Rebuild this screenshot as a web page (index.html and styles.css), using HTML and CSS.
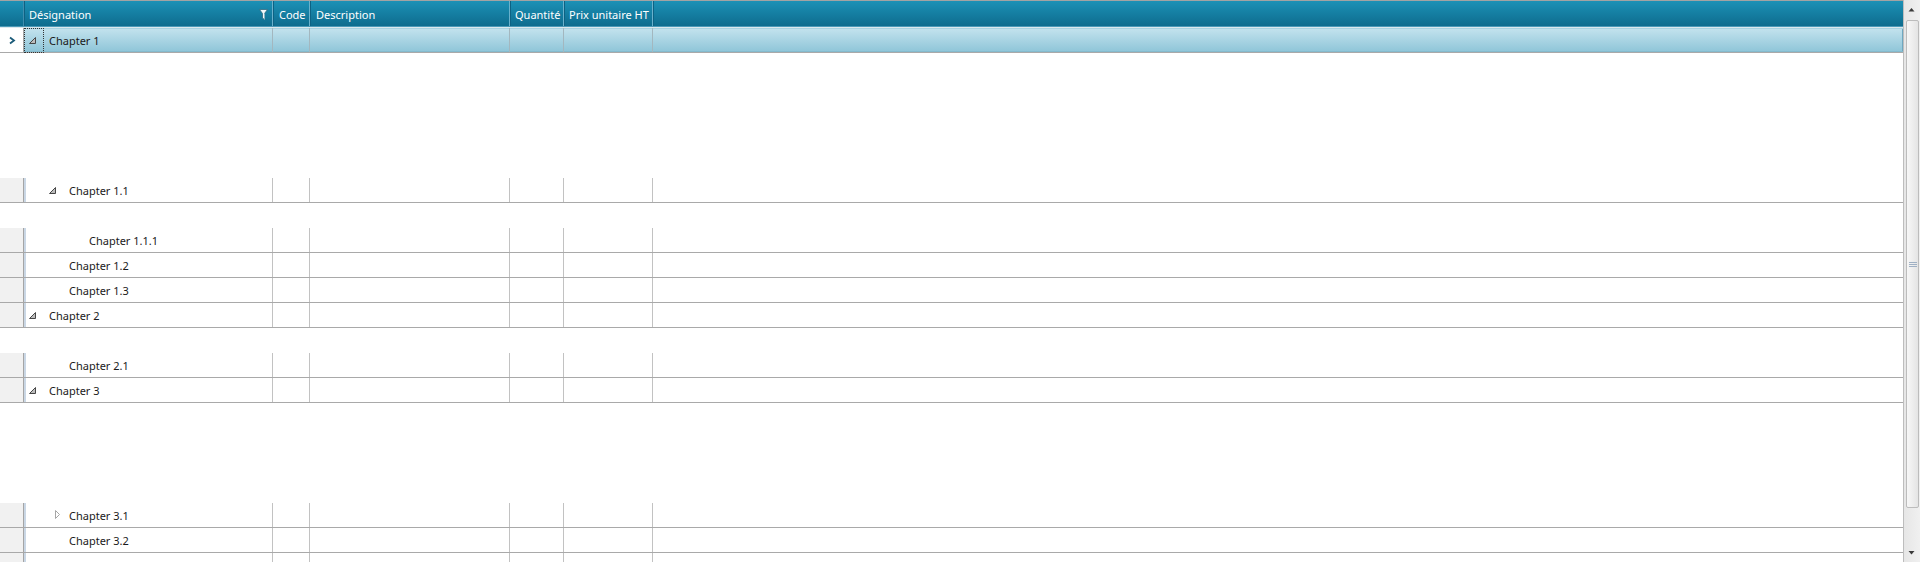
FILE: index.html
```html
<!DOCTYPE html>
<html lang="fr">
<head>
<meta charset="utf-8">
<title>Grille</title>
<link rel="stylesheet" href="styles.css">
</head>
<body>
<div class="grid">
  <div class="main">
    <div class="header">
      <div class="hcell sel"></div>
      <div class="hcell des"><span class="htxt">Désignation</span>
        <svg class="funnel" width="9" height="11" viewBox="0 0 9 11"><path d="M0.5,0.5 H8.5 L5.5,4.5 V10.5 L3.5,9 V4.5 Z" fill="#f2f8fa" stroke="#2f6a80" stroke-width="0.8"/><path d="M5.5,4.5 V10.5" stroke="#8fb3c1" stroke-width="1"/></svg>
      </div>
      <div class="hcell code"><span class="htxt">Code</span></div>
      <div class="hcell desc"><span class="htxt">Description</span></div>
      <div class="hcell qty"><span class="htxt">Quantité</span></div>
      <div class="hcell prix"><span class="htxt">Prix unitaire HT</span></div>
      <div class="hcell fill"></div>
    </div>
    <div class="body">
      <div class="row selected">
        <div class="cell sel"><svg class="chev" width="22" height="24" viewBox="0 0 22 24"><path d="M10,9.5 L14,12.5 L10,15.5" fill="none" stroke="#1b5b79" stroke-width="1.8"/></svg></div>
        <div class="cell des lvl1"><span class="exp"><svg width="20" height="24" viewBox="0 0 20 24"><path d="M11.5,9.5 V15.5 H5.5 Z" fill="#bdbdbd" stroke="#474747" stroke-width="1"/></svg></span><span class="txt">Chapter 1</span><span class="focus"></span></div>
        <div class="cell code"></div><div class="cell desc"></div><div class="cell qty"></div><div class="cell prix"></div><div class="cell fill"></div>
      </div>
      <div class="blank"></div><div class="blank"></div><div class="blank"></div><div class="blank"></div><div class="blank"></div>
      <div class="row">
        <div class="cell sel"></div>
        <div class="cell des lvl2"><span class="exp"><svg width="20" height="24" viewBox="0 0 20 24"><path d="M11.5,9.5 V15.5 H5.5 Z" fill="#bdbdbd" stroke="#474747" stroke-width="1"/></svg></span><span class="txt">Chapter 1.1</span></div>
        <div class="cell code"></div><div class="cell desc"></div><div class="cell qty"></div><div class="cell prix"></div><div class="cell fill"></div>
      </div>
      <div class="blank"></div>
      <div class="row">
        <div class="cell sel"></div>
        <div class="cell des lvl3"><span class="exp"></span><span class="txt">Chapter 1.1.1</span></div>
        <div class="cell code"></div><div class="cell desc"></div><div class="cell qty"></div><div class="cell prix"></div><div class="cell fill"></div>
      </div>
      <div class="row">
        <div class="cell sel"></div>
        <div class="cell des lvl2"><span class="exp"></span><span class="txt">Chapter 1.2</span></div>
        <div class="cell code"></div><div class="cell desc"></div><div class="cell qty"></div><div class="cell prix"></div><div class="cell fill"></div>
      </div>
      <div class="row">
        <div class="cell sel"></div>
        <div class="cell des lvl2"><span class="exp"></span><span class="txt">Chapter 1.3</span></div>
        <div class="cell code"></div><div class="cell desc"></div><div class="cell qty"></div><div class="cell prix"></div><div class="cell fill"></div>
      </div>
      <div class="row">
        <div class="cell sel"></div>
        <div class="cell des lvl1"><span class="exp"><svg width="20" height="24" viewBox="0 0 20 24"><path d="M11.5,9.5 V15.5 H5.5 Z" fill="#bdbdbd" stroke="#474747" stroke-width="1"/></svg></span><span class="txt">Chapter 2</span></div>
        <div class="cell code"></div><div class="cell desc"></div><div class="cell qty"></div><div class="cell prix"></div><div class="cell fill"></div>
      </div>
      <div class="blank"></div>
      <div class="row">
        <div class="cell sel"></div>
        <div class="cell des lvl2"><span class="exp"></span><span class="txt">Chapter 2.1</span></div>
        <div class="cell code"></div><div class="cell desc"></div><div class="cell qty"></div><div class="cell prix"></div><div class="cell fill"></div>
      </div>
      <div class="row">
        <div class="cell sel"></div>
        <div class="cell des lvl1"><span class="exp"><svg width="20" height="24" viewBox="0 0 20 24"><path d="M11.5,9.5 V15.5 H5.5 Z" fill="#bdbdbd" stroke="#474747" stroke-width="1"/></svg></span><span class="txt">Chapter 3</span></div>
        <div class="cell code"></div><div class="cell desc"></div><div class="cell qty"></div><div class="cell prix"></div><div class="cell fill"></div>
      </div>
      <div class="blank"></div><div class="blank"></div><div class="blank"></div><div class="blank"></div>
      <div class="row">
        <div class="cell sel"></div>
        <div class="cell des lvl2"><span class="exp"><svg width="20" height="24" viewBox="0 0 20 24"><path d="M11.5,7.5 L15.5,11.5 L11.5,15.5 Z" fill="#ffffff" stroke="#a6a6a6" stroke-width="1"/></svg></span><span class="txt">Chapter 3.1</span></div>
        <div class="cell code"></div><div class="cell desc"></div><div class="cell qty"></div><div class="cell prix"></div><div class="cell fill"></div>
      </div>
      <div class="row">
        <div class="cell sel"></div>
        <div class="cell des lvl2"><span class="exp"></span><span class="txt">Chapter 3.2</span></div>
        <div class="cell code"></div><div class="cell desc"></div><div class="cell qty"></div><div class="cell prix"></div><div class="cell fill"></div>
      </div>
      <div class="row">
        <div class="cell sel"></div>
        <div class="cell des lvl2"><span class="exp"></span><span class="txt">Chapter 3.3</span></div>
        <div class="cell code"></div><div class="cell desc"></div><div class="cell qty"></div><div class="cell prix"></div><div class="cell fill"></div>
      </div>
    </div>
  </div>
  <div class="vscroll">
    <div class="sbtn"><svg width="16" height="20" viewBox="0 0 16 20"><path d="M4.5,11.5 L7.5,8 L10.5,11.5 Z" fill="#3a3a3a"/></svg></div>
    <div class="thumb"><span class="grip"></span><span class="grip"></span><span class="grip"></span></div>
    <div class="track"></div>
    <div class="sbtn"><svg width="16" height="20" viewBox="0 0 16 20"><path d="M4.5,9 L10.5,9 L7.5,12.5 Z" fill="#3a3a3a"/></svg></div>
  </div>
</div>
</body>
</html>
```
FILE: styles.css
```css
html, body {
  margin: 0;
  padding: 0;
  overflow: hidden;
  background: #ffffff;
}
body {
  font-family: "Noto Sans", "Open Sans", sans-serif;
  font-size: 11px;
  color: #1a1a1a;
}
.grid {
  display: flex;
  width: 1920px;
  height: 562px;
}
.main {
  flex: 1;
  min-width: 0;
  display: flex;
  flex-direction: column;
  overflow: hidden;
}
.header {
  display: flex;
  flex: none;
  height: 27px;
  box-sizing: border-box;
  border-top: 1px solid #a3a3a3;
  border-bottom: 1px solid #4a99b7;
  background: linear-gradient(#1c91b6, #0e6c8e);
  color: #ffffff;
}
.hcell {
  box-sizing: border-box;
  height: 25px;
  padding-left: 5px;
  border-right: 1px solid #69b1cc;
  box-shadow: inset 1px 0 0 #0d6283;
  white-space: nowrap;
  overflow: hidden;
  flex: none;
  display: flex;
  align-items: center;
}
.htxt {
  padding-top: 2px;
  line-height: 22px;
}
.hcell.sel { box-shadow: none; border-right-color: #3f8eaf; }
.hcell.code, .hcell.desc { padding-left: 6px; }
.hcell.des {
  justify-content: space-between;
  padding-right: 4px;
}
.funnel { display: block; margin-top: 1px; }
.body {
  flex: 1;
  overflow: hidden;
  border-top: 1px solid #dce8ed;
}
.sel { width: 24px; }
.des { width: 249px; }
.code { width: 37px; }
.desc { width: 200px; }
.qty { width: 54px; }
.prix { width: 89px; }
.fill { flex: 1; }
.hcell.fill { border-right: none; }

.row {
  display: flex;
  height: 25px;
  box-sizing: border-box;
  border-bottom: 1px solid #a9a9a9;
}
.blank { height: 25px; }
.cell {
  box-sizing: border-box;
  height: 24px;
  border-right: 1px solid #c2c2c2;
  flex: none;
}
.cell.fill { flex: 1; border-right: none; }
.row .cell.sel {
  background: #f1f1f1;
  border-right: 1px solid #a5a5a5;
}
.row .cell.des {
  display: flex;
  align-items: center;
  position: relative;
  box-shadow: inset 2px 0 0 #cad7e5;
}
.lvl2 { padding-left: 20px; }
.lvl3 { padding-left: 40px; }
.exp {
  flex: none;
  width: 20px;
  height: 24px;
}
.exp svg { display: block; }
.txt {
  padding-left: 5px;
  padding-top: 2px;
  line-height: 22px;
  white-space: nowrap;
}
.row.selected .cell {
  background: linear-gradient(#c4e3ee, #8ec5d8);
  border-right-color: #a3b7bf;
  box-shadow: inset 0 1px 0 #a6d2e1, inset 0 -1px 0 #84bacd;
}
.row.selected .cell.sel {
  background: #ffffff;
  box-shadow: none;
  border-right-color: #a5a5a5;
}
.row.selected .cell.des {
  box-shadow: inset 0 1px 0 #a6d2e1, inset 0 -1px 0 #84bacd;
}
.row.selected .cell.fill {
  box-shadow: inset 0 1px 0 #a6d2e1, inset 0 -1px 0 #84bacd, inset -1px 0 0 #6fa8c0;
}
.chev { display: block; }
.focus {
  position: absolute;
  left: 0;
  top: 0;
  width: 20px;
  height: 25px;
  box-sizing: border-box;
  border: 1px dotted #333333;
}

.vscroll {
  width: 17px;
  flex: none;
  box-sizing: border-box;
  border-left: 1px solid #bdbdbd;
  background: linear-gradient(90deg, #e6e6e6, #f0f0f0);
  display: flex;
  flex-direction: column;
}
.sbtn {
  height: 20px;
  flex: none;
}
.sbtn svg { display: block; }
.thumb {
  height: 488px;
  flex: none;
  margin: 0 1px 0 2px;
  box-sizing: border-box;
  border: 1px solid #bcbcbc;
  border-radius: 2px;
  background: linear-gradient(90deg, #f7f7f7, #e4e4e4);
  display: flex;
  flex-direction: column;
  align-items: center;
  justify-content: center;
  gap: 1px;
}
.grip {
  display: block;
  width: 8px;
  height: 1px;
  background: #9fb0c4;
}
.track { flex: 1; }
```
